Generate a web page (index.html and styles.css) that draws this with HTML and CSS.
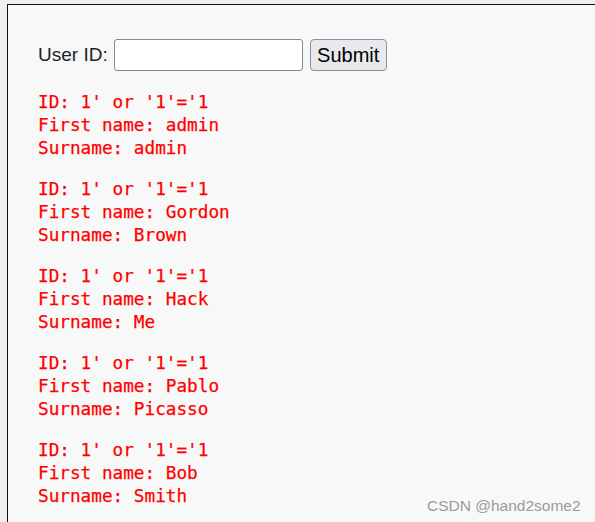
FILE: index.html
```html
<!DOCTYPE html>
<html>
<head>
<meta charset="utf-8">
<link rel="stylesheet" href="styles.css">
</head>
<body>
<div class="frame">
  <form class="form">
    <label class="label">User ID:</label>
    <input class="input" type="text">
    <button class="btn" type="button">Submit</button>
  </form>
  <pre class="result">ID: 1' or '1'='1
First name: admin
Surname: admin</pre>
  <pre class="result">ID: 1' or '1'='1
First name: Gordon
Surname: Brown</pre>
  <pre class="result">ID: 1' or '1'='1
First name: Hack
Surname: Me</pre>
  <pre class="result">ID: 1' or '1'='1
First name: Pablo
Surname: Picasso</pre>
  <pre class="result">ID: 1' or '1'='1
First name: Bob
Surname: Smith</pre>
  <div class="watermark">CSDN @hand2some2</div>
</div>
</body>
</html>
```

FILE: styles.css
```css
html, body {
  margin: 0;
  padding: 0;
  background: #f0f0f0;
}
body {
  padding: 4px 0 0 7px;
  height: 522px;
  box-sizing: border-box;
  overflow: hidden;
}
.frame {
  position: relative;
  border-top: 1px solid #111;
  border-left: 1px solid #111;
  background: #f7f8f8;
  height: 518px;
  padding: 34px 0 0 30px;
  box-sizing: border-box;
  overflow: hidden;
}
.form {
  display: flex;
  align-items: center;
  margin: 0 0 20px 0;
  height: 32px;
}
.label {
  font-family: "Liberation Sans", Arial, sans-serif;
  font-size: 19px;
  color: #222;
  margin-right: 6px;
}
.input {
  width: 189px;
  height: 32px;
  box-sizing: border-box;
  border: 1px solid #888;
  border-radius: 3px;
  background: #fff;
  margin: 0 7px 0 0;
  padding: 0;
}
.btn {
  height: 32px;
  width: 77px;
  box-sizing: border-box;
  border: 1px solid #8f8f9d;
  border-radius: 4px;
  background: #e9e9ed;
  font-family: "Liberation Sans", Arial, sans-serif;
  font-size: 20px;
  color: #000;
  padding: 0;
}
.result {
  margin: 0 0 18px 0;
  font-family: "DejaVu Sans Mono", monospace;
  font-size: 17.7px;
  line-height: 23px;
  color: #ff0000;
  -webkit-text-stroke: 0.25px #ff0000;
}
.watermark {
  position: absolute;
  left: 419px;
  top: 492px;
  font-family: "Liberation Sans", Arial, sans-serif;
  font-size: 15.5px;
  color: #9a9a9a;
}
```
